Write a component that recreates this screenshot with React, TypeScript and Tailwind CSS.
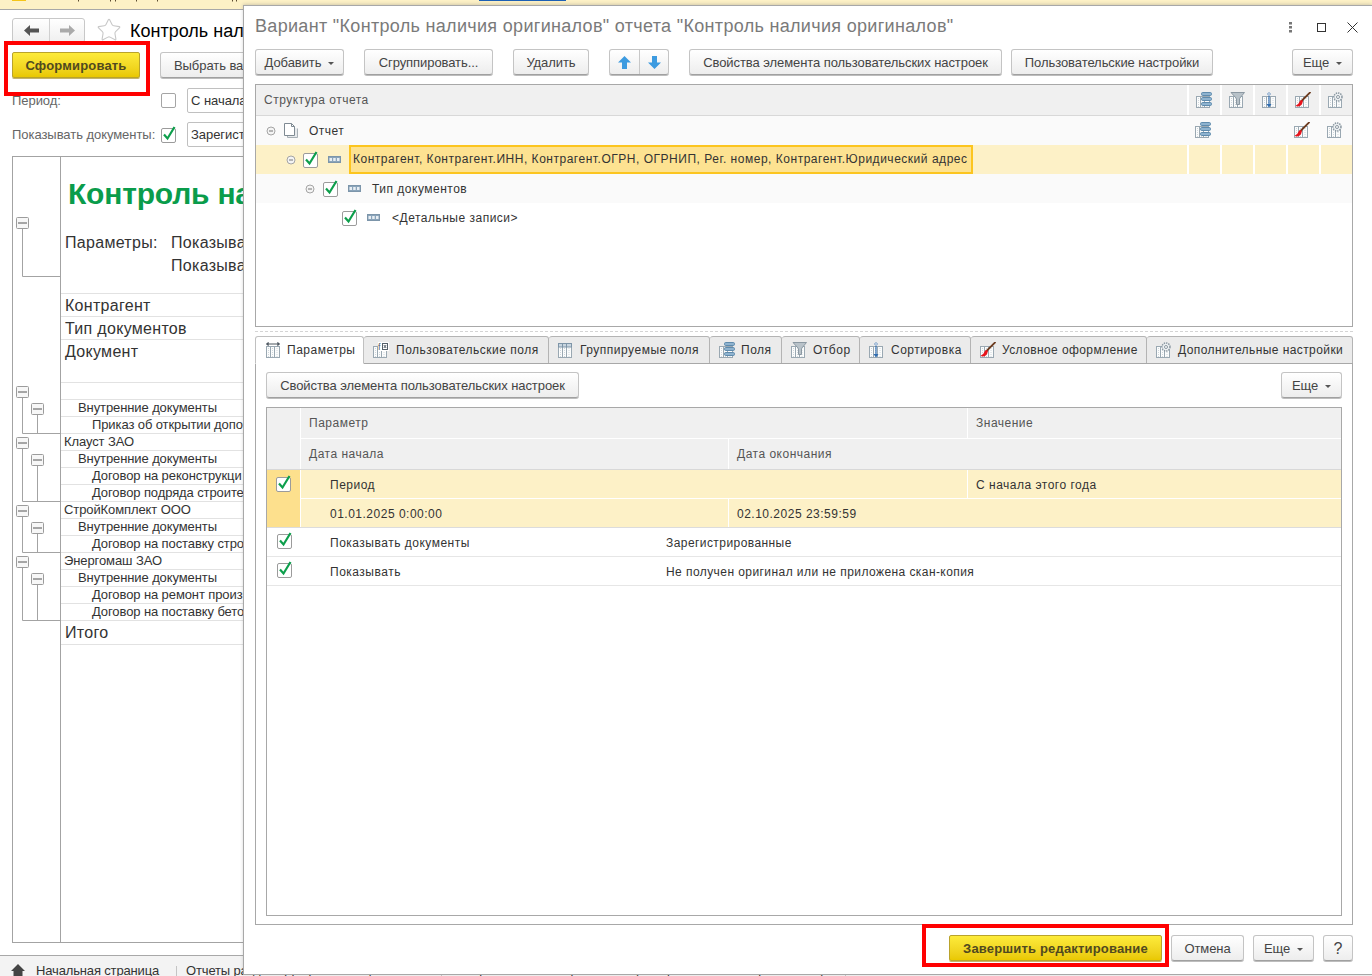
import React from 'react';
import { Star } from 'lucide-react';

// Small drawings for the 1C toolbar and tab icons
const Grid = () => (
  <g fill="#fbfcfc" stroke="#9aa8b2">
    <rect x="1.5" y="4.5" width="4" height="11" />
    <rect x="5.5" y="4.5" width="4" height="11" />
    <rect x="9.5" y="4.5" width="5" height="11" />
    <path d="M3.5 6v9M7.5 6v9M12 6v9" stroke="#d0d7dc" strokeDasharray="1 1" />
  </g>
);

type IconKind = 'params' | 'fx' | 'group' | 'fields' | 'filter' | 'sort' | 'brush' | 'gear';

function TableIcon({ kind }: { kind: IconKind }) {
  return (
    <svg width="17" height="17" viewBox="0 0 17 17" className="shrink-0">
      <Grid />
      {kind === 'params' && (
        <g stroke="#4c565f" fill="#4c565f">
          <path d="M3 2h10" fill="none" />
          <path d="M1 2l2.500-2v4zM15 2l-2.500-2v4z" strokeWidth="0.3" />
        </g>
      )}
      {kind === 'fx' && (
        <g>
          <rect x="6" y="0" width="11" height="9" fill="#fff" />
          <text x="6" y="8" fontSize="9" fill="#55606a" fontFamily="Liberation Sans, sans-serif">f</text>
          <rect x="10.5" y="1.5" width="5" height="6" fill="#fff" stroke="#55606a" />
          <path d="M11.8 3l2.4 3M14.2 3l-2.4 3" stroke="#55606a" />
        </g>
      )}
      {kind === 'group' && (
        <g fill="#c9d6e0" stroke="#7e95a8">
          <rect x="1.5" y="1.5" width="4" height="3.5" />
          <rect x="5.5" y="1.5" width="4" height="3.5" />
          <rect x="9.5" y="1.5" width="5" height="3.5" />
        </g>
      )}
      {kind === 'fields' && (
        <g fill="#8fb3cf" stroke="#5f8bad">
          <rect x="6.500" y="0.500" width="10" height="3" rx="1.2" />
          <rect x="6.500" y="5.500" width="10" height="3" rx="1.2" />
          <rect x="6.500" y="10.500" width="10" height="3" rx="1.2" />
        </g>
      )}
      {kind === 'filter' && <path d="M3 0.500h13.500l-5 6v6h-3v-6z" fill="#b8c2c9" stroke="#8b98a2" />}
      {kind === 'sort' && (
        <g>
          <path d="M8 0.500l1.500 1.500-1.500 1.500-1.500-1.500z" fill="#fff" stroke="#3f74b0" strokeWidth="0.8" />
          <path d="M8 4v9" stroke="#2f6cb0" strokeWidth="1.2" />
          <path d="M5.500 12h5l-2.500 3.500z" fill="#2f6cb0" />
        </g>
      )}
      {kind === 'brush' && (
        <g>
          <path d="M16.500 0L7 9.500" stroke="#6b3a1e" strokeWidth="1.800" />
          <path d="M7.500 8c-2 .5-2 2-3 3.500-.6 1-2 1.500-3 2.500 3 1 5.500 0 6.500-2 .6-1 .7-2.500 1-3z" fill="#e8141c" />
        </g>
      )}
      {kind === 'gear' && (
        <g>
          <circle cx="11" cy="5" r="4" fill="#eef1f3" stroke="#8b98a2" strokeDasharray="1.400 0.900" strokeWidth="1.500" />
          <circle cx="11" cy="5" r="1.500" fill="#fff" stroke="#8b98a2" />
        </g>
      )}
    </svg>
  );
}

const Check = () => (
  <svg width="18" height="18" viewBox="0 0 18 18" className="shrink-0">
    <rect x="1.500" y="3.500" width="14" height="14" rx="1.500" fill="#fff" stroke="#9b9b9b" />
    <path d="M4 9.500l3.500 4L14.500 2" fill="none" stroke="#0d9f4c" strokeWidth="2.200" />
  </svg>
);

const MinusCircle = () => (
  <svg width="10" height="10" viewBox="0 0 10 10" className="shrink-0">
    <circle cx="5" cy="5" r="4" fill="#f4f4f4" stroke="#a5a5a5" />
    <path d="M3 5h4" stroke="#777" />
  </svg>
);

const FieldIcon = () => (
  <svg width="13" height="7" viewBox="0 0 13 7" className="shrink-0">
    <rect x="0.500" y="0.500" width="12" height="6" fill="#8aa4ba" stroke="#7c95aa" />
    <path d="M1.500 2h2.500v3H1.500zM5.200 2h2.500v3H5.200zM9 2h2.500v3H9z" fill="#e8eef3" />
  </svg>
);

const DocIcon = () => (
  <svg width="14" height="15" viewBox="0 0 14 15" className="shrink-0">
    <path d="M3.500 3.500v11h10v-9" fill="#e6e9ec" stroke="#a8b0b6" />
    <path d="M0.500 0.500h7l3 3v9h-10z" fill="#fff" stroke="#7f8a93" />
    <path d="M7.500 0.500v3h3" fill="none" stroke="#7f8a93" />
  </svg>
);

function Btn({ w, children, className = 'justify-center' }: { w: string; children: React.ReactNode; className?: string }) {
  return (
    <div className={`${w} h-[26px] pt-[1px] shrink-0 flex items-center whitespace-nowrap rounded-[3px] border border-[#c4c4c4] border-b-[#a0a0a0] bg-gradient-to-b from-white to-[#ededed] shadow-[0_1px_0_#bdbdbd] text-[13px] tracking-[-0.07px] text-[#444] ${className}`}>
      {children}
    </div>
  );
}

const Caret = () => <span className="ml-[7px] mt-[1px] w-0 h-0 border-x-[3px] border-x-transparent border-t-[3px] border-t-[#555]" />;

function YellowBtn({ w, children }: { w: string; children: React.ReactNode }) {
  return (
    <div className={`${w} h-[26px] pt-[1px] shrink-0 flex items-center justify-center whitespace-nowrap rounded-[2px] border border-[#b9a32c] bg-gradient-to-b from-[#fdeb3a] to-[#e9c800] shadow-[0_1px_0_#c4b46a] text-[13px] font-bold tracking-[0.17px] text-[#50491f]`}>
      {children}
    </div>
  );
}

// Report grouping outline, coordinates are page coordinates
const outlineBoxes = [
  [16, 217],
  [16, 386],
  [31, 403],
  [16, 437],
  [31, 454],
  [16, 505],
  [31, 522],
  [16, 556],
  [31, 573],
];

function ReportOutline() {
  return (
    <svg width="47" height="785" viewBox="13 157 47 785" className="shrink-0">
      <g fill="none" stroke="#a3a3a3">
        <path d="M22.500 229v47.500H60" />
        <path d="M22.500 397v36.500H60M37.500 414v19" />
        <path d="M22.500 448v53.500H60M37.500 465v36" />
        <path d="M22.500 516v36.500H60M37.500 533v19" />
        <path d="M22.500 567v53.500H60M37.500 584v36" />
      </g>
      {outlineBoxes.map(([x, y]) => (
        <g key={`${x}-${y}`}>
          <rect x={x + 0.5} y={y + 0.5} width="12" height="11" rx="1" fill="#f7f7f7" stroke="#9c9c9c" />
          <path d={`M${x + 2} ${y + 6}h9`} stroke="#555" />
        </g>
      ))}
    </svg>
  );
}

const reportRows: { text: string; pl: string }[] = [
  { text: '', pl: 'pl-[17px]' },
  { text: 'Внутренние документы', pl: 'pl-[17px]' },
  { text: 'Приказ об открытии допо', pl: 'pl-[31px]' },
  { text: 'Клауст ЗАО', pl: 'pl-[3px]' },
  { text: 'Внутренние документы', pl: 'pl-[17px]' },
  { text: 'Договор на реконструкци', pl: 'pl-[31px]' },
  { text: 'Договор подряда строите', pl: 'pl-[31px]' },
  { text: 'СтройКомплект ООО', pl: 'pl-[3px]' },
  { text: 'Внутренние документы', pl: 'pl-[17px]' },
  { text: 'Договор на поставку стро', pl: 'pl-[31px]' },
  { text: 'Энергомаш ЗАО', pl: 'pl-[3px]' },
  { text: 'Внутренние документы', pl: 'pl-[17px]' },
  { text: 'Договор на ремонт произ', pl: 'pl-[31px]' },
  { text: 'Договор на поставку бето', pl: 'pl-[31px]' },
];

function BackgroundForm() {
  return (
    <div className="flex flex-col h-full">
      <div className="relative h-[10px] shrink-0 bg-[#fdf1c6] border-b border-[#a8a8a8]">
        <div className="absolute left-[12px] top-0 w-[14px] h-[1px] bg-[#f5c518]" />
        <svg width="460" height="2" viewBox="0 0 460 2" className="absolute left-0 top-0">
          <path d="M78.500 0v1.500M110.500 0v1.500M115.500 0v1.500M136.500 0v1.500M157.500 0v1.500M232.500 0v1.500M236.500 0v1.500" stroke="#5a4a30" />
        </svg>
      </div>

      {/* the left form is covered by the dialog from x=243 */}
      <div className="w-[243px] overflow-hidden shrink-0">
        <div className="w-[420px]">
          <div className="flex items-center h-[24px] mt-[8px] pl-[12px]">
            <div className="flex w-[73px] h-[25px] rounded-[3px] border border-[#c8c8c8] bg-gradient-to-b from-white to-[#efefef]">
              <div className="w-[37px] flex items-center justify-center border-r border-[#d0d0d0]">
                <svg width="15" height="11" viewBox="0 0 15 11"><path d="M0 5.500L6 0v3.500h9v4H6V11z" fill="#555" /></svg>
              </div>
              <div className="flex-1 flex items-center justify-center">
                <svg width="15" height="11" viewBox="0 0 15 11"><path d="M15 5.500L9 0v3.500H0v4h9V11z" fill="#aaa" /></svg>
              </div>
            </div>
            <Star className="ml-[11px] w-[26px] h-[26px] text-[#c8c8c8]" strokeWidth={1} />
            <span className="ml-[8px] pt-[2px] text-[18px] text-black whitespace-nowrap">Контроль нал</span>
          </div>

          <div className="flex items-center mt-[10px] pl-[12px]">
            <YellowBtn w="w-[128px]">Сформировать</YellowBtn>
            <Btn w="w-[148px]" className="ml-[20px] pl-[13px]">Выбрать ва</Btn>
          </div>

          <div className="flex items-center h-[25px] mt-[10px] pl-[12px] text-[13px] tracking-[-0.05px] text-[#666]">
            <span className="w-[149px] pt-[1px]">Период:</span>
            <span className="w-[15px] h-[15px] rounded-[2px] border border-[#a5a5a5] bg-white" />
            <span className="ml-[11px] w-[200px] h-[25px] pl-[3px] flex items-center rounded-[2px] border border-[#c0c0c0] text-[#333]">С начала</span>
          </div>
          <div className="flex items-center h-[25px] mt-[9px] pl-[12px] text-[13px] tracking-[-0.05px] text-[#666]">
            <span className="w-[148px] whitespace-nowrap">Показывать документы:</span>
            <span className="-mt-[2px] flex"><Check /></span>
            <span className="ml-[9px] w-[200px] h-[25px] pl-[3px] flex items-center rounded-[2px] border border-[#c0c0c0] text-[#333]">Зарегист</span>
          </div>

          <div className="flex h-[787px] mt-[9px] ml-[12px] border border-[#a3a3a3] shrink-0">
            <div className="border-r border-[#a3a3a3] w-[48px] shrink-0">
              <ReportOutline />
            </div>
            <div className="flex-1 flex flex-col text-[#333]">
              <div className="h-[73px] flex items-center pl-[7px] text-[30px] font-bold tracking-[-0.2px] text-[#0a9c4b] whitespace-nowrap">Контроль на</div>
              <div className="h-[24px] flex items-center pl-[4px] pt-[1px] text-[16px] tracking-[0.3px] whitespace-nowrap">
                <span className="w-[106px]">Параметры:</span>Показыва
              </div>
              <div className="h-[23px] flex items-center pl-[110px] text-[16px] tracking-[0.3px] whitespace-nowrap">Показыва</div>
              <div className="h-[17px] border-b border-[#e2e2e2]" />
              <div className="h-[23px] flex items-center pl-[4px] pt-[1px] text-[16px] tracking-[0.3px] border-b border-[#e2e2e2]">Контрагент</div>
              <div className="h-[23px] flex items-center pl-[4px] pt-[1px] text-[16px] tracking-[0.3px] border-b border-[#e2e2e2]">Тип документов</div>
              <div className="h-[43px] pl-[4px] text-[16px] tracking-[0.3px] leading-[23px] border-b border-[#e2e2e2]">Документ</div>
              {reportRows.map((r, i) => (
                <div key={i} className={`h-[17px] flex items-center ${r.pl} text-[13px] tracking-[-0.1px] whitespace-nowrap border-b border-[#e2e2e2]`}>{r.text}</div>
              ))}
              <div className="h-[24px] flex items-center pl-[4px] text-[16px] tracking-[0.3px] border-b border-[#e2e2e2]">Итого</div>
            </div>
          </div>
        </div>
      </div>

      <div className="flex items-center h-[21px] mt-[12px] bg-[#f3f3f3] border-t border-[#a8a8a8] text-[13px] tracking-[-0.15px] text-[#333] whitespace-nowrap shrink-0 pt-[10px]">
        <svg width="16" height="14" viewBox="0 0 16 14" className="ml-[10px]"><path d="M8 0l7 7h-2.500v7h-9V7H1z" fill="#444" /></svg>
        <span className="ml-[10px] w-[140px]">Начальная страница</span>
        <span className="h-full border-l border-[#c4c4c4]" />
        <span className="ml-[9px] w-[255px]">Отчеты раздела Документы и файлы</span>
        <span className="h-full border-l border-[#c4c4c4]" />
        <span className="ml-[10px] w-[393px]">Контроль наличия оригиналов (Контроль наличия оригиналов)</span>
        <span className="h-full border-l border-[#c4c4c4]" />
      </div>
    </div>
  );
}

function TreeRow({ bg, pl, circle, icon, children }: { bg: string; pl: string; circle?: boolean; icon: React.ReactNode; children: React.ReactNode }) {
  return (
    <div className={`flex items-center h-[29px] ${bg} ${pl}`}>
      {circle && <span className="mr-[7px] flex"><MinusCircle /></span>}
      {icon}
      {children}
    </div>
  );
}

const TreeCheck = () => <span className="-mt-[2px] flex"><Check /></span>;

const structureTools: IconKind[] = ['fields', 'filter', 'sort', 'brush', 'gear'];
const tabs: { label: string; cls: string; icon: IconKind; gap: string }[] = [
  { label: 'Пользовательские поля', cls: 'w-[185px]', icon: 'fx', gap: 'ml-[7px]' },
  { label: 'Группируемые поля', cls: 'w-[161px]', icon: 'group', gap: 'ml-[6px]' },
  { label: 'Поля', cls: 'w-[72px]', icon: 'fields', gap: 'ml-[6px]' },
  { label: 'Отбор', cls: 'w-[78px]', icon: 'filter', gap: 'ml-[6px]' },
  { label: 'Сортировка', cls: 'w-[111px]', icon: 'sort', gap: 'ml-[6px]' },
  { label: 'Условное оформление', cls: 'w-[176px] tracking-[0.4px]', icon: 'brush', gap: 'ml-[6px]' },
  { label: 'Дополнительные настройки', cls: 'flex-1 tracking-[0.42px]', icon: 'gear', gap: 'ml-[6px]' },
];

function Dialog() {
  return (
    <div className="absolute left-[243px] top-[5px] w-[1129px] h-[970px] bg-white border border-r-0 border-[#a8a8a8] flex flex-col pl-[11px] pr-[19px] text-[#333] shadow-[0_-1px_3px_rgba(120,120,120,0.3)]">
      <div className="relative flex items-center h-[43px] shrink-0 pb-[2px]">
        <span className="text-[18px] tracking-[0.315px] text-[#7a7a7a] whitespace-nowrap">Вариант "Контроль наличия оригиналов" отчета "Контроль наличия оригиналов"</span>
        <div className="absolute left-[1034px] top-[16px] flex items-center">
          <svg width="3" height="11" viewBox="0 0 3 11"><path d="M0 0h3v2.500H0zM0 4h3v2.500H0zM0 8h3v2.500H0z" fill="#777" /></svg>
          <span className="ml-[25px] w-[9px] h-[9px] border border-[#333]" />
          <svg width="11" height="11" viewBox="0 0 11 11" className="ml-[21px]"><path d="M0.500 0.500l10 10M10.500 0.500l-10 10" stroke="#333" fill="none" /></svg>
        </div>
      </div>

      <div className="flex items-center shrink-0">
        <Btn w="w-[89px]" className="justify-center">Добавить<Caret /></Btn>
        <Btn w="w-[129px]" className="justify-center ml-[20px]">Сгруппировать...</Btn>
        <Btn w="w-[76px]" className="justify-center ml-[20px]">Удалить</Btn>
        <div className="ml-[20px] flex w-[60px] h-[26px] rounded-[3px] border border-[#c4c4c4] border-b-[#a0a0a0] bg-gradient-to-b from-white to-[#ededed] shadow-[0_1px_0_#bdbdbd]">
          <div className="w-[30px] flex items-center justify-center border-r border-[#c8c8c8]">
            <svg width="13" height="13" viewBox="0 0 13 13"><path d="M6.500 0L13 6.500H9V13H4V6.500H0z" fill="#3d9be0" /></svg>
          </div>
          <div className="flex-1 flex items-center justify-center">
            <svg width="13" height="13" viewBox="0 0 13 13"><path d="M6.500 13L13 6.500H9V0H4v6.500H0z" fill="#3d9be0" /></svg>
          </div>
        </div>
        <Btn w="w-[313px]" className="justify-center ml-[20px]">Свойства элемента пользовательских настроек</Btn>
        <Btn w="w-[202px]" className="justify-center ml-[9px]">Пользовательские настройки</Btn>
        <Btn w="w-[61px]" className="justify-center ml-auto">Еще<Caret /></Btn>
      </div>

      <div className="mt-[9px] h-[243px] shrink-0 border border-[#a8a8a8] flex flex-col">
        <div className="flex h-[31px] bg-[#f0f0f0] border-b border-[#d8d8d8] shrink-0">
          <div className="flex-1 flex items-center pl-[8px] text-[12px] tracking-[0.5px] text-[#555]">Структура отчета</div>
          {structureTools.map((k) => (
            <div key={k} className="w-[33px] flex items-center justify-center pr-[3px] border-l-2 border-white"><TableIcon kind={k} /></div>
          ))}
        </div>

        <div className="flex bg-[#fafafa]">
          <div className="flex-1">
            <TreeRow bg="bg-[#fafafa]" pl="pl-[10px]" circle icon={<span className="ml-[1px] flex"><DocIcon /></span>}>
              <span className="ml-[11px] text-[12px] tracking-[0.5px]">Отчет</span>
            </TreeRow>
          </div>
          {structureTools.map((k) => (
            <div key={k} className="w-[33px] flex items-center justify-center pr-[2px]">
              {(k === 'fields' || k === 'brush' || k === 'gear') && <TableIcon kind={k} />}
            </div>
          ))}
        </div>

        <div className="flex h-[29px] bg-[#fdf1c7]">
          <div className="flex-1 flex items-center pl-[30px]">
            <span className="mr-[6px] flex"><MinusCircle /></span>
            <TreeCheck />
            <span className="ml-[8px] flex"><FieldIcon /></span>
            <div className="ml-[8px] w-[624px] h-[29px] flex items-center pl-[2px] pb-[1px] border-2 border-[#fcc51f] bg-[#fde291] text-[12px] tracking-[0.52px] whitespace-nowrap">
              Контрагент, Контрагент.ИНН, Контрагент.ОГРН, ОГРНИП, Рег. номер, Контрагент.Юридический адрес
            </div>
          </div>
          {structureTools.map((k) => <div key={k} className="w-[33px] border-l-2 border-white" />)}
        </div>

        <TreeRow bg="bg-[#fafafa]" pl="pl-[49px]" circle icon={<><TreeCheck /><span className="ml-[8px] flex"><FieldIcon /></span></>}>
          <span className="ml-[11px] text-[12px] tracking-[0.5px]">Тип документов</span>
        </TreeRow>
        <TreeRow bg="bg-white" pl="pl-[85px]" icon={<><TreeCheck /><span className="ml-[8px] flex"><FieldIcon /></span></>}>
          <span className="ml-[12px] text-[12px] tracking-[0.5px]">&lt;Детальные записи&gt;</span>
        </TreeRow>
      </div>

      <div className="mt-[4px] border-t border-dashed border-[#d4d4d4] shrink-0" />

      <div className="mt-[4px] flex h-[28px] -mb-px shrink-0 text-[12px] tracking-[0.5px]">
        <div className="relative z-10 w-[109px] flex items-center pl-[9px] rounded-t-[3px] border border-[#c0c0c0] border-b-white bg-white text-[#333]">
          <TableIcon kind="params" />
          <span className="ml-[5px]">Параметры</span>
        </div>
        {tabs.map((t) => (
          <div key={t.label} className={`${t.cls} flex items-center pl-[8px] rounded-t-[3px] border border-l-0 border-[#b4b4b4] bg-[#ebebeb] whitespace-nowrap`}>
            <TableIcon kind={t.icon} />
            <span className={t.gap}>{t.label}</span>
          </div>
        ))}
      </div>

      <div className="h-[562px] shrink-0 border border-[#a8a8a8] px-[10px] pt-[8px] flex flex-col">
        <div className="flex justify-between shrink-0">
          <Btn w="w-[313px]">Свойства элемента пользовательских настроек</Btn>
          <Btn w="w-[61px]">Еще<Caret /></Btn>
        </div>

        <div className="mt-[9px] h-[509px] border border-[#a8a8a8] flex flex-col text-[12px] tracking-[0.5px]">
          <div className="flex h-[62px] shrink-0 gap-[1px] border-b border-[#d8d8d8] text-[#555]">
            <div className="w-[33px] bg-[#f0f0f0]" />
            <div className="flex-1 flex flex-col gap-[1px]">
              <div className="flex flex-1 gap-[1px]">
                <div className="w-[666px] bg-[#f0f0f0] flex items-center pl-[8px]">Параметр</div>
                <div className="flex-1 bg-[#f0f0f0] flex items-center pl-[8px]">Значение</div>
              </div>
              <div className="flex flex-1 gap-[1px]">
                <div className="w-[427px] bg-[#f0f0f0] flex items-center pl-[8px]">Дата начала</div>
                <div className="flex-1 bg-[#f0f0f0] flex items-center pl-[8px]">Дата окончания</div>
              </div>
            </div>
          </div>

          <div className="flex h-[58px] shrink-0 gap-[1px] border-b border-[#dcdcdc]">
            <div className="w-[33px] bg-[#fde08d] pl-[8px] pt-[4px]"><Check /></div>
            <div className="flex-1 flex flex-col gap-[1px]">
              <div className="flex flex-1 gap-[1px]">
                <div className="w-[666px] bg-[#fdf1c7] flex items-center pl-[29px] pt-[1px]">Период</div>
                <div className="flex-1 bg-[#fdf1c7] flex items-center pl-[8px] pt-[1px]">С начала этого года</div>
              </div>
              <div className="flex flex-1 gap-[1px]">
                <div className="w-[427px] bg-[#fdf1c7] flex items-center pl-[29px] pt-[1px]">01.01.2025 0:00:00</div>
                <div className="flex-1 bg-[#fdf1c7] flex items-center pl-[8px] pt-[1px]">02.10.2025 23:59:59</div>
              </div>
            </div>
          </div>

          <div className="flex items-center h-[29px] shrink-0 pl-[9px] pt-[1px] border-b border-[#e6e6e6]">
            <span className="-mt-[5px] flex"><Check /></span>
            <span className="ml-[36px] w-[336px]">Показывать документы</span>
            <span className="tracking-[0.43px]">Зарегистрированные</span>
          </div>
          <div className="flex items-center h-[29px] shrink-0 pl-[9px] pt-[1px] border-b border-[#e6e6e6]">
            <span className="-mt-[5px] flex"><Check /></span>
            <span className="ml-[36px] w-[336px]">Показывать</span>
            <span className="tracking-[0.43px]">Не получен оригинал или не приложена скан-копия</span>
          </div>
        </div>
      </div>

      <div className="relative flex items-center h-[26px] mt-[10px] pl-[694px] shrink-0">
        <div className="absolute left-[667px] -top-[11px] w-[247px] h-[43px] border-4 border-[#ff0000]" />
        <YellowBtn w="w-[213px]">Завершить редактирование</YellowBtn>
        <Btn w="w-[73px]" className="justify-center ml-[9px]">Отмена</Btn>
        <Btn w="w-[61px]" className="justify-center ml-[9px]">Еще<Caret /></Btn>
        <Btn w="w-[30px]" className="justify-center ml-[9px] !text-[16px]">?</Btn>
      </div>
    </div>
  );
}

export default function App() {
  return (
    <div className="relative w-[1372px] h-[976px] overflow-hidden bg-white font-['Liberation_Sans',sans-serif]">
      <BackgroundForm />
      <div className="absolute left-[4px] top-[41px] w-[146px] h-[55px] border-4 border-[#ff0000]" />
      <div className="absolute left-[479px] top-0 w-[87px] h-[1px] bg-[#1c5fb4]" />
      <Dialog />
    </div>
  );
}
